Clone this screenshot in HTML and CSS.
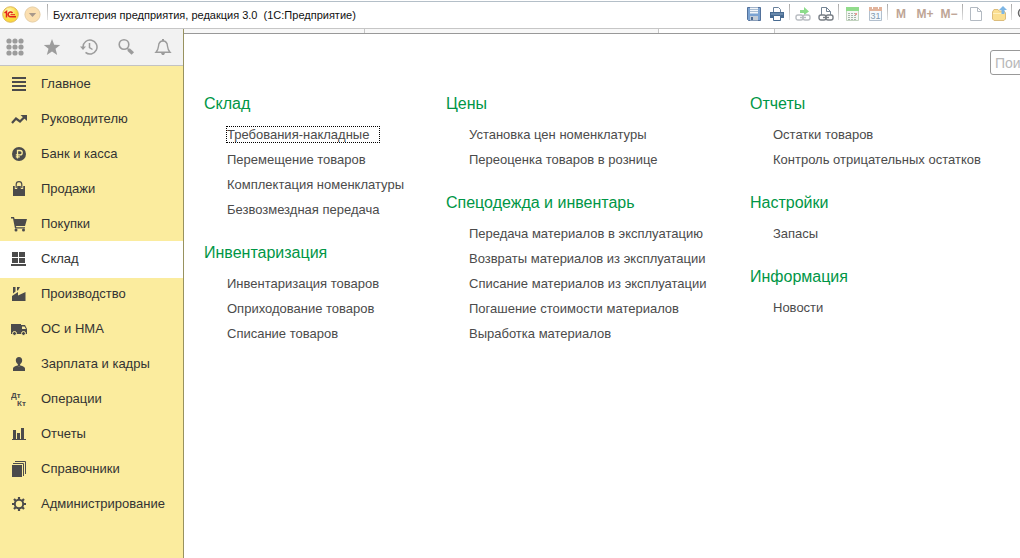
FILE: index.html
```html
<!DOCTYPE html>
<html lang="ru">
<head>
<meta charset="utf-8">
<title>Бухгалтерия предприятия, редакция 3.0</title>
<link rel="stylesheet" href="styles.css">
</head>
<body>
<header class="titlebar">
  <button class="round" aria-label="1С">
    <svg width="17" height="17" viewBox="0 0 17 17"><defs><radialGradient id="g1" cx=".4" cy=".3"><stop offset="0" stop-color="#fffbc0"/><stop offset="1" stop-color="#fbd93c"/></radialGradient></defs><circle cx="8.500" cy="8.500" r="7.800" fill="url(#g1)" stroke="#dfb75a"/><path d="M2.500 7l2-1.500V11.500M10.500 7A2.400 2.400 0 1 0 8.500 10.800H14" fill="none" stroke="#e2231a" stroke-width="1.500"/><path d="M8.500 8.700H13" stroke="#e2231a"/></svg>
  </button>
  <button class="round" aria-label="Меню">
    <svg width="17" height="17" viewBox="0 0 17 17"><circle cx="8.500" cy="8.500" r="7.600" fill="#fbdfb0" stroke="#e5cda4"/><path d="M4.800 7h7.400l-3.700 4z" fill="#a8988a"/></svg>
  </button>
  <span class="sep"></span>
  <h1 class="title">Бухгалтерия предприятия, редакция 3.0 &nbsp;(1С:Предприятие)</h1>
  <div class="tools">
    <button class="tool" aria-label="Сохранить"><svg width="16" height="16" viewBox="0 0 16 16"><path d="M1.500 1.500h13v13h-12l-1-1z" fill="#7ba3d2" stroke="#52719b"/><path d="M4 1.500h8v6H4z" fill="#f3f6f9"/><path d="M4 3.500h8M4 5.500h8" stroke="#a9bdd2"/><path d="M4 10h8v4.500H4z" fill="#c3ccd6"/><path d="M5 11h2v3H5z" fill="#4c6b93"/></svg></button>
    <button class="tool" aria-label="Печать"><svg width="16" height="16" viewBox="0 0 16 16"><path d="M4.500 6V1.500h5l2 2V6" fill="#fff" stroke="#68809b"/><path d="M1 6h14v6H1z" fill="#486b91"/><path d="M2 8h12" stroke="#8caac8"/><path d="M4.500 9.500h7v5h-7z" fill="#fff" stroke="#486b91"/></svg></button>
    <span class="sep"></span>
    <button class="tool" aria-label="Получить ссылку"><svg width="16" height="16" viewBox="0 0 16 16"><path d="M5 4h4V1l5 4.500L9 9V7H5z" fill="#8ddc8b"/><g fill="#fff" stroke="#b9bdc2" stroke-width="1.400"><rect x="1" y="9" width="7" height="5" rx="2"/><rect x="8" y="9" width="7" height="5" rx="2"/></g><path d="M5 11.500h6" stroke="#b9bdc2" stroke-width="1.400"/></svg></button>
    <button class="tool" aria-label="Перейти по ссылке"><svg width="16" height="16" viewBox="0 0 16 16"><path d="M3.500 9V1.500h5l4 4V9" fill="#fff" stroke="#758595"/><path d="M8.500 1.500v4h4" fill="none" stroke="#758595"/><g fill="#fff" stroke="#777d84" stroke-width="1.400"><rect x="1" y="9" width="7" height="5" rx="2"/><rect x="8" y="9" width="7" height="5" rx="2"/></g><path d="M5 11.500h6" stroke="#777d84" stroke-width="1.400"/></svg></button>
    <span class="sep"></span>
    <button class="tool" aria-label="Калькулятор"><svg width="16" height="16" viewBox="0 0 16 16"><path d="M2.500 1.500h12v13h-12z" fill="#f4f7f3" stroke="#c2d3bf"/><path d="M2 1h13v4H2z" fill="#91dc8c"/><path d="M4 7.500h9M4 9.500h9M4 11.500h9M4 13.500h9" stroke="#a7b5aa" stroke-dasharray="2 1"/><path d="M11 7h2v2h-2z" fill="#eb9c94"/></svg></button>
    <button class="tool" aria-label="Календарь"><svg width="16" height="16" viewBox="0 0 16 16"><path d="M2.500 2.500h12v12h-12z" fill="#f5f9fc" stroke="#b2bfcd"/><path d="M2 1h13v4H2z" fill="#e2b49c"/><path d="M5.500 0v3M11.500 0v3" stroke="#fff"/><text x="8.500" y="13" text-anchor="middle" class="cal-day">31</text></svg></button>
    <span class="sep"></span>
    <button class="tool mem">M</button>
    <button class="tool mem">M+</button>
    <button class="tool mem">M−</button>
    <span class="sep"></span>
    <button class="tool" aria-label="Новый"><svg width="16" height="16" viewBox="0 0 16 16"><path d="M2.500 1.500h7l4 4v9h-11z" fill="#fff" stroke="#b3bac2"/><path d="M9.500 1.500v4h4" fill="none" stroke="#b3bac2"/></svg></button>
    <button class="tool" aria-label="Открыть"><svg width="16" height="16" viewBox="0 0 16 16"><path d="M1.500 6l1.500-2.500h4L8 5h5l1.500 2v6l-1.500 1.500H3L1.500 13z" fill="#fbdf91" stroke="#dcbd7c"/><path d="M2 7.500h12" stroke="#fff0be"/><path d="M12 0l4 4h-2.500v4h-3V4H8z" fill="#7db6e5"/></svg></button>
    <span class="sep"></span>
    <button class="tool" aria-label="Найти"><svg width="16" height="16" viewBox="0 0 16 16"><circle cx="6" cy="7" r="4.500" fill="#fff" stroke="#666" stroke-width="1.500"/><path d="M9 10l5 5" stroke="#666" stroke-width="2"/></svg></button>
  </div>
</header>

<div class="body">
  <aside class="side">
    <div class="quick">
      <button class="q" aria-label="Разделы"><svg width="18" height="18" viewBox="0 0 18 18" fill="#9c9c9c"><circle cx="3" cy="3" r="2.600"/><circle cx="9" cy="3" r="2.600"/><circle cx="15" cy="3" r="2.600"/><circle cx="3" cy="9" r="2.600"/><circle cx="9" cy="9" r="2.600"/><circle cx="15" cy="9" r="2.600"/><circle cx="3" cy="15" r="2.600"/><circle cx="9" cy="15" r="2.600"/><circle cx="15" cy="15" r="2.600"/></svg></button>
      <button class="q" aria-label="Избранное"><svg width="18" height="18" viewBox="0 0 18 18"><path d="M9 1l2.200 5.700 6 .3-4.700 3.800L14.200 17 9 13.500 3.800 17l1.700-6.200L.8 7l6-.3z" fill="#9c9c9c"/></svg></button>
      <button class="q" aria-label="История"><svg width="18" height="18" viewBox="0 0 18 18"><path d="M3 10V9a7 7 0 1 1 2.500 5.400" fill="none" stroke="#9c9c9c" stroke-width="1.500"/><path d="M0 8.500h6L3 12z" fill="#9c9c9c"/><path d="M9.500 5v4.500l3 2" fill="none" stroke="#9c9c9c" stroke-width="1.500"/></svg></button>
      <button class="q" aria-label="Поиск"><svg width="18" height="18" viewBox="0 0 18 18"><circle cx="7" cy="6.500" r="4.800" fill="none" stroke="#9c9c9c" stroke-width="1.600"/><path d="M10 10l2 2" stroke="#9c9c9c" stroke-width="1.600"/><path d="M11.500 11.500l4.300 4" stroke="#9c9c9c" stroke-width="3.600"/></svg></button>
      <button class="q" aria-label="Оповещения"><svg width="18" height="18" viewBox="0 0 18 18"><path d="M2 14.200c2-2 2.200-3.200 2.500-6C4.700 4.800 6.500 3 9 3s4.300 1.800 4.500 5.200c.3 2.800.5 4 2.500 6z" fill="none" stroke="#9c9c9c" stroke-width="1.400"/><path d="M8 1h2v2H8zM7 15h4l-1 2H8z" fill="#9c9c9c"/></svg></button>
    </div>
    <nav class="menu">
      <a class="item" href="#"><svg width="16" height="16" viewBox="0 0 16 16" fill="#4b4b4b"><path d="M1 1h14v2H1zM1 5h14v2H1zM1 9h14v2H1zM1 13h14v2H1z"/></svg>Главное</a>
      <a class="item" href="#"><svg width="16" height="16" viewBox="0 0 16 16"><path d="M1 12l4-4.500 4 3L13.500 6" fill="none" stroke="#4b4b4b" stroke-width="2.200"/><path d="M9.500 4H16v6z" fill="#4b4b4b"/></svg>Руководителю</a>
      <a class="item" href="#"><svg width="16" height="16" viewBox="0 0 16 16"><circle cx="8" cy="8" r="7" fill="#4b4b4b"/><path d="M6.500 12.500V4.500H9a2.200 2.200 0 0 1 0 4.400H4.800M4.800 10.800h4" fill="none" stroke="#fbec9e" stroke-width="1.300"/></svg>Банк и касса</a>
      <a class="item" href="#"><svg width="16" height="16" viewBox="0 0 16 16"><path d="M2 5h12v10H2z" fill="#4b4b4b"/><path d="M5 8V4a3 3 0 0 1 6 0v4" fill="none" stroke="#fbec9e" stroke-width="2.400"/><path d="M5.200 7V3.500a2.800 2.800 0 0 1 5.600 0V7" fill="none" stroke="#4b4b4b" stroke-width="1.200"/></svg>Продажи</a>
      <a class="item" href="#"><svg width="16" height="16" viewBox="0 0 16 16"><path d="M0 1h3l.6 2H16l-2 7H5l.3 1.200H14V12.500H4L2 2.500H0z" fill="#4b4b4b"/><circle cx="5" cy="14" r="1.500" fill="#4b4b4b"/><circle cx="12.500" cy="14" r="1.500" fill="#4b4b4b"/></svg>Покупки</a>
      <a class="item active" href="#"><svg width="16" height="16" viewBox="0 0 16 16" fill="#4b4b4b"><path d="M1 1h6v5H1zM8 1h6v5H8zM1 7h6v5H1zM8 7h6v5H8zM0 13h15v2H0z"/></svg>Склад</a>
      <a class="item" href="#"><svg width="16" height="16" viewBox="0 0 16 16" fill="#4b4b4b"><path d="M1 15v-5l6-4v3.500L14.500 6v9zM2 1h2.500v4.500L2 7.500zM6 1h3l-2 3.500H6z"/></svg>Производство</a>
      <a class="item" href="#"><svg width="16" height="16" viewBox="0 0 16 16"><path d="M0 3h10v1h4l2 4v5H0z" fill="#4b4b4b"/><path d="M11 5.500h2.500L15 8h-4z" fill="#fbec9e"/><circle cx="3.500" cy="12.500" r="2" fill="#4b4b4b" stroke="#fbec9e"/><circle cx="12.500" cy="12.500" r="2" fill="#4b4b4b" stroke="#fbec9e"/></svg>ОС и НМА</a>
      <a class="item" href="#"><svg width="16" height="16" viewBox="0 0 16 16" fill="#4b4b4b"><path d="M8 1c2 0 3.200 1.300 3.200 3.300S10 8.500 8 8.500 4.800 6.300 4.800 4.300 6 1 8 1zM6.800 8h2.400v2H6.800zM2 15v-2.500C2 11 4 10.200 6.500 9.500L8 10.500l1.500-1C12 10.200 14 11 14 12.500V15z"/></svg>Зарплата и кадры</a>
      <a class="item" href="#"><svg width="16" height="16" viewBox="0 0 16 16"><text x="0" y="7" class="dk">Дт</text><text x="6" y="15" class="dk">Кт</text></svg>Операции</a>
      <a class="item" href="#"><svg width="16" height="16" viewBox="0 0 16 16" fill="#4b4b4b"><path d="M2 4h3v9H2zM6 7h3v6H6zM10 2h3v11h-3zM1 13h14v1H1z"/></svg>Отчеты</a>
      <a class="item" href="#"><svg width="16" height="16" viewBox="0 0 16 16"><path d="M1 4h10v12H1z" fill="#4b4b4b"/><path d="M2 2.500h10.500V15M4 .5h10.500V13" fill="none" stroke="#4b4b4b"/></svg>Справочники</a>
      <a class="item" href="#"><svg width="16" height="16" viewBox="0 0 16 16"><circle cx="8" cy="8" r="4.200" fill="none" stroke="#4b4b4b" stroke-width="2"/><path d="M8 1v3M8 12v3M1 8h3M12 8h3M3 3l2.200 2.200M10.800 10.800L13 13M3 13l2.200-2.200M10.800 5.200L13 3" stroke="#4b4b4b" stroke-width="2.200"/></svg>Администрирование</a>
    </nav>
  </aside>
  <div class="content">
    <div class="tabs"><span class="tab"></span><span class="tab tab-mid"></span><span class="tab"></span></div>
    <main class="panel">
      <div class="search-row"><input class="search" type="text" placeholder="Поиск (Ctrl+F)" aria-label="Поиск"></div>
      <div class="columns">
        <div class="col">
          <section class="group"><h2>Склад</h2><ul>
            <li><a class="focused" href="#">Требования-накладные</a></li><li><a href="#">Перемещение товаров</a></li><li><a href="#">Комплектация номенклатуры</a></li><li><a href="#">Безвозмездная передача</a></li></ul></section>
          <section class="group"><h2>Инвентаризация</h2><ul>
            <li><a href="#">Инвентаризация товаров</a></li><li><a href="#">Оприходование товаров</a></li><li><a href="#">Списание товаров</a></li></ul></section>
        </div>
        <div class="col">
          <section class="group"><h2>Цены</h2><ul>
            <li><a href="#">Установка цен номенклатуры</a></li><li><a href="#">Переоценка товаров в рознице</a></li></ul></section>
          <section class="group"><h2>Спецодежда и инвентарь</h2><ul>
            <li><a href="#">Передача материалов в эксплуатацию</a></li><li><a href="#">Возвраты материалов из эксплуатации</a></li><li><a href="#">Списание материалов из эксплуатации</a></li><li><a href="#">Погашение стоимости материалов</a></li><li><a href="#">Выработка материалов</a></li></ul></section>
        </div>
        <div class="col">
          <section class="group"><h2>Отчеты</h2><ul>
            <li><a href="#">Остатки товаров</a></li><li><a href="#">Контроль отрицательных остатков</a></li></ul></section>
          <section class="group"><h2>Настройки</h2><ul>
            <li><a href="#">Запасы</a></li></ul></section>
          <section class="group"><h2>Информация</h2><ul>
            <li><a href="#">Новости</a></li></ul></section>
        </div>
      </div>
    </main>
  </div>
</div>
</body>
</html>
```
FILE: styles.css
```css
* { box-sizing: border-box; }

body {
  margin: 0;
  min-height: 100vh;
  display: flex;
  flex-direction: column;
  overflow: hidden;
  background: #fff;
  font: 13px/16px "Liberation Sans", Arial, sans-serif;
  color: #333;
}

button {
  padding: 0;
  border: 0;
  background: none;
  font: inherit;
}

svg { display: block; flex: none; }
a { color: inherit; text-decoration: none; }

.titlebar {
  display: flex;
  align-items: center;
  height: 29px;
  padding-left: 2px;
  border-bottom: 1px solid #c6c6c6;
  background: linear-gradient(#fff 1px, #b4bfc8 1px, #b4bfc8 2px, #fff 2px);
}

.round { width: 22px; flex: none; }

.sep {
  width: 1px;
  height: 16px;
  margin: 4px 1px 0;
  flex: none;
  align-self: flex-start;
  background: linear-gradient(#aaa, #e4e4e4);
}

.title {
  flex: 1;
  margin: 0;
  padding: 2px 0 0 4px;
  font: 11px/16px "Liberation Sans", Arial, sans-serif;
  color: #111;
  white-space: nowrap;
}

.tools { display: flex; margin-right: -16px; height: 28px; flex: none; }
.tool { width: 23px; display: flex; align-items: center; justify-content: center; }
.mem { width: 24px; font: bold 12px/16px "Liberation Sans", Arial, sans-serif; color: #bea595; }
.cal-day { font: 9px "Liberation Sans", Arial, sans-serif; fill: #8299ae; }

.body { flex: 1; display: flex; }

.side {
  width: 184px;
  flex: none;
  border-right: 1px solid #98925f;
  background: #fbec9e;
}

.quick {
  display: flex;
  height: 37px;
  padding-left: 6px;
  gap: 19px;
  border-bottom: 1px solid #c3c3c3;
  background: #f2f2f2;
}

.q { display: flex; align-items: center; }

.item {
  display: flex;
  align-items: center;
  gap: 14px;
  height: 35px;
  padding-left: 11px;
}

.active { background: #fff; box-shadow: 0 2px 0 #fff; }
.dk { font: bold 8px "Liberation Sans", Arial, sans-serif; fill: #4b4b4b; }

.content { flex: 1; min-width: 0; display: flex; flex-direction: column; }

.tabs { display: flex; height: 5px; border-bottom: 1px solid #999; background: #f8f8f8; }
.tab { width: 181px; border-right: 1px solid #c6c6c6; }
.tab-mid { width: 294px; }
.tab:last-child { width: 116px; background: #fff; }

.panel { flex: 1; overflow: hidden; }

.search-row { display: flex; justify-content: flex-end; padding: 16px 0; }

.search {
  width: 200px;
  height: 25px;
  margin-right: -170px;
  padding: 0 4px;
  border: 1px solid #999;
  border-radius: 3px;
  font: 14px/16px "Liberation Sans", Arial, sans-serif;
}

.search::placeholder { color: #b8b8b8; }

.columns {
  display: grid;
  grid-template-columns: 242px 304px 1fr;
  padding-left: 20px;
}

.group { margin-bottom: 18px; }

h2 {
  margin: 0 0 5px;
  font-size: 16px;
  line-height: 26px;
  font-weight: normal;
  color: #009646;
}

ul { margin: 0; padding: 0 0 0 23px; list-style: none; }
li { line-height: 25px; white-space: nowrap; color: #4b4b4b; }

.focused { padding-right: 10px; outline: 1px dotted #000; }
```
